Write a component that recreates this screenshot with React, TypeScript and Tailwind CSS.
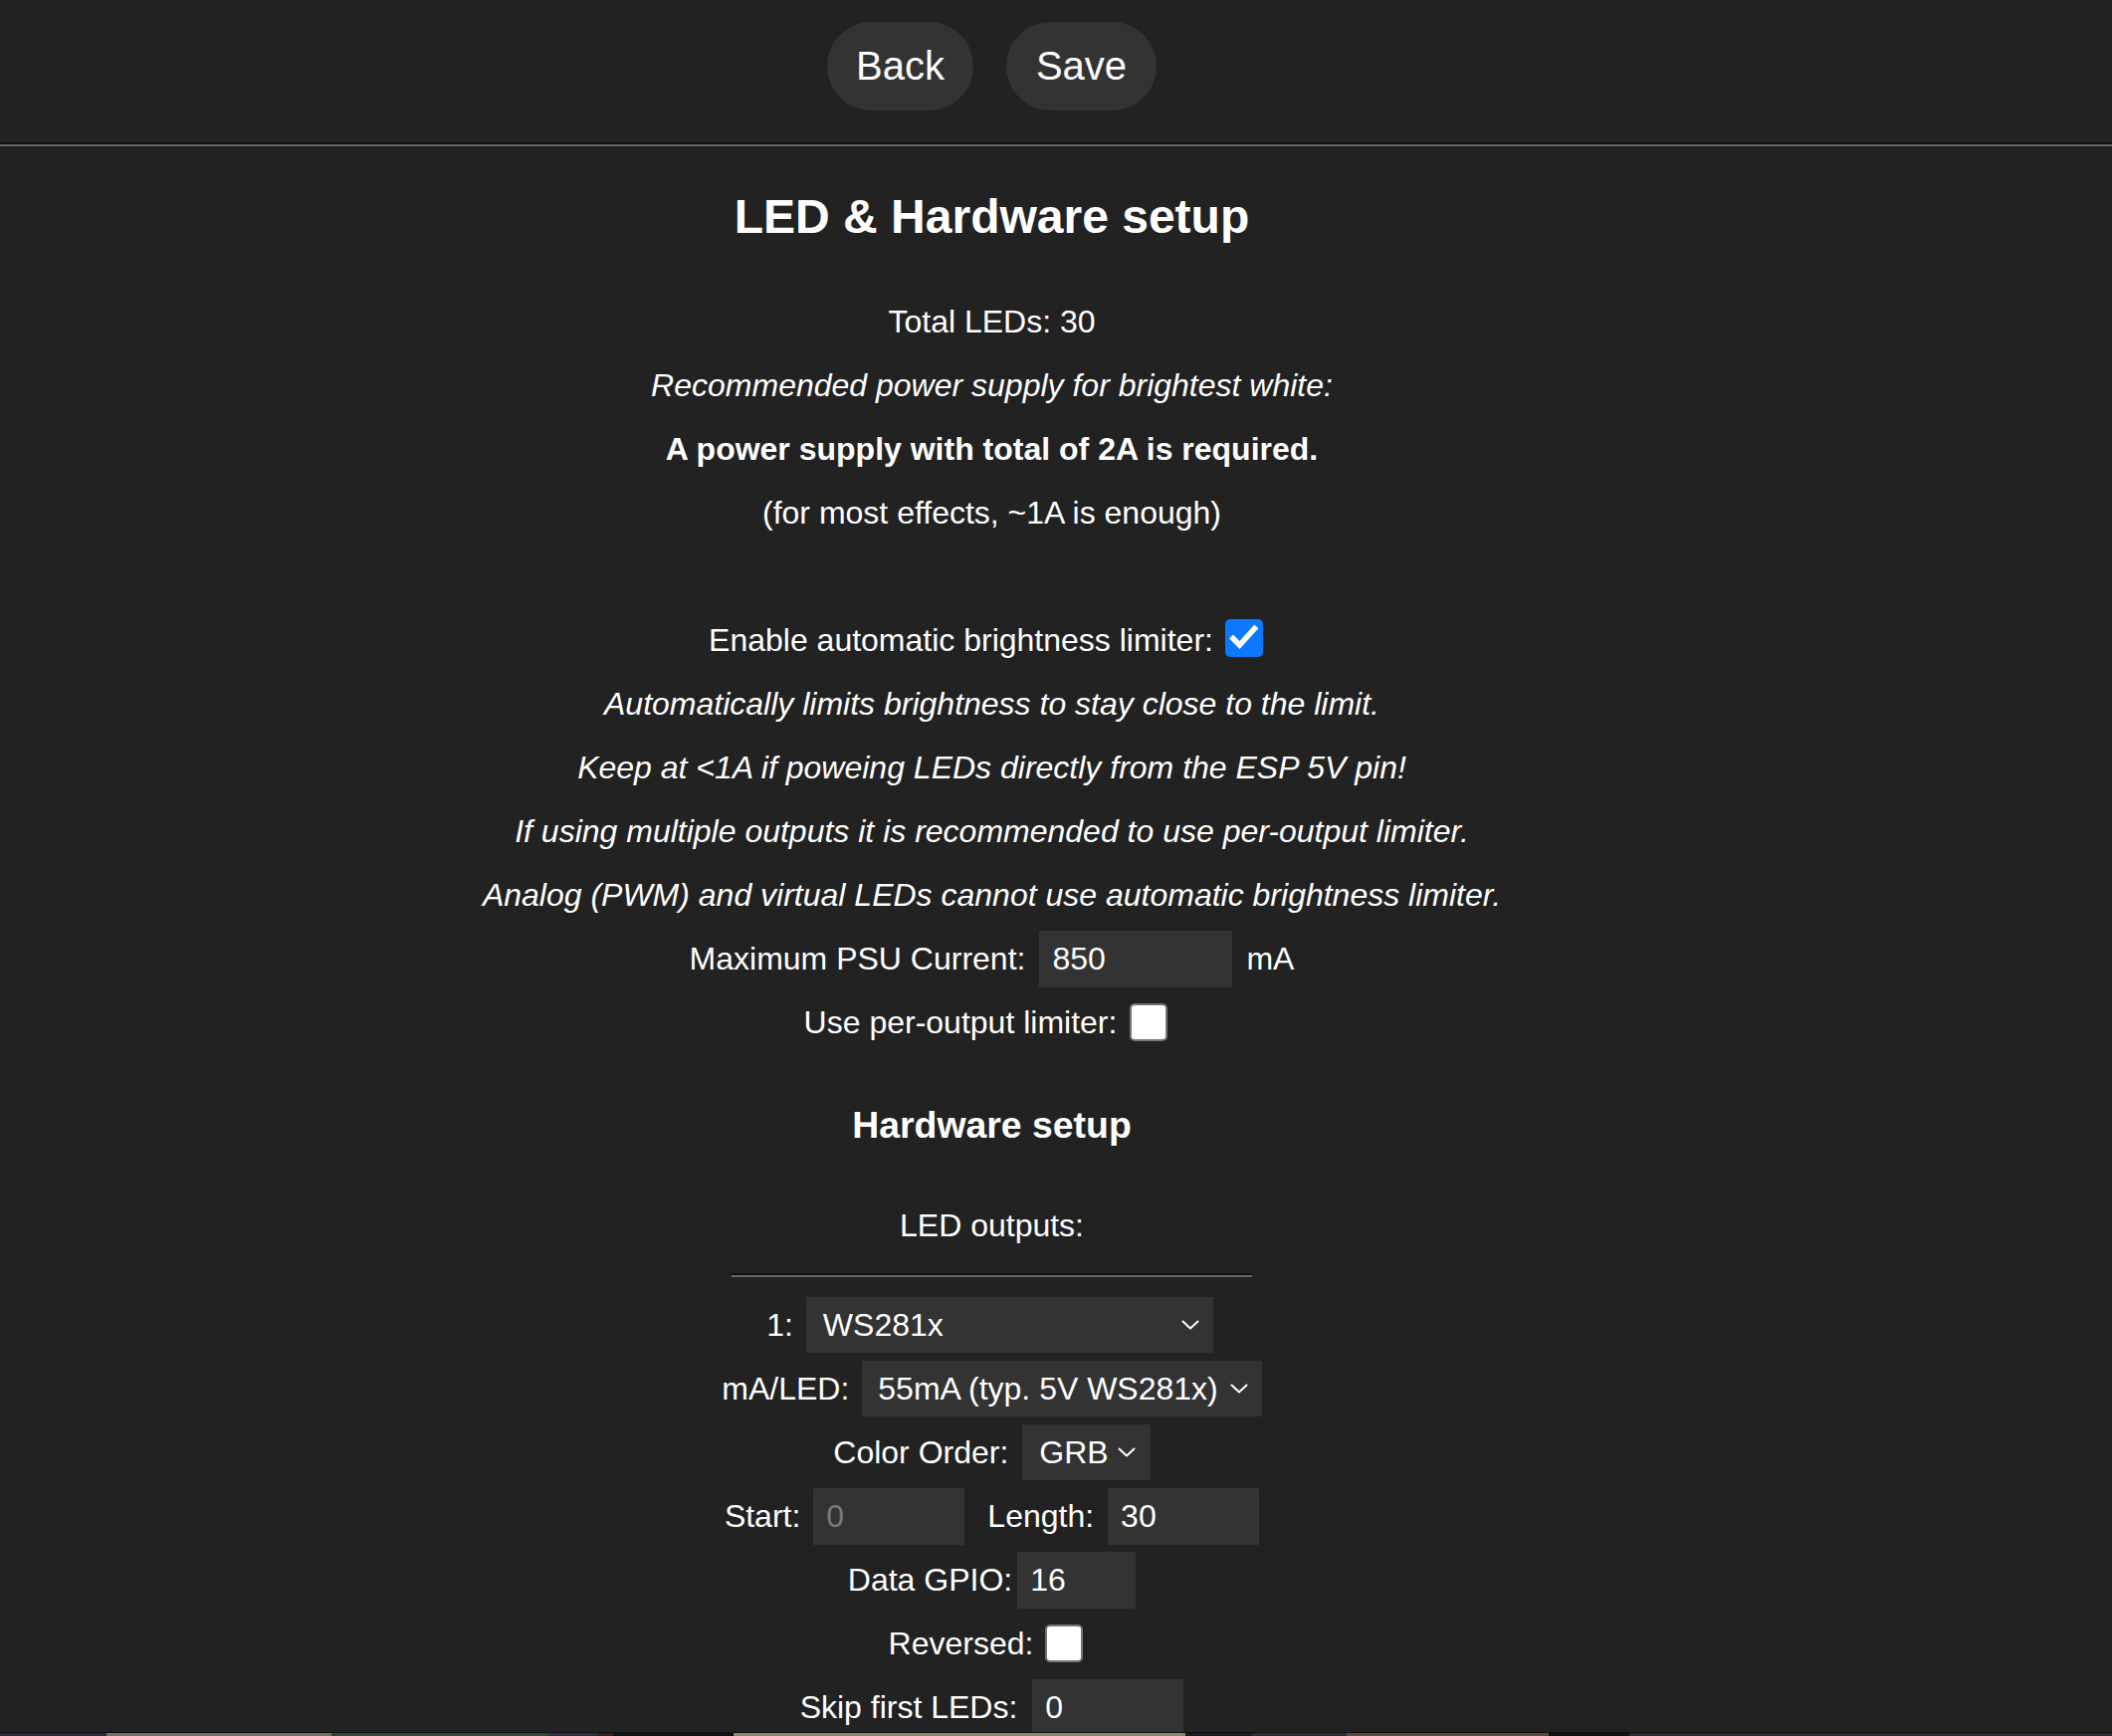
import React from "react";

// chevron used by the fake selects
const Chevron = () => (
  <svg width="18" height="10" viewBox="0 0 18 10" className="shrink-0">
    <path d="M1.5 1.5 L9 8.5 L16.5 1.5" fill="none" stroke="#fff" strokeWidth="2" strokeLinecap="round" strokeLinejoin="round" />
  </svg>
);

const CheckBox = ({ checked, className = "" }: { checked: boolean; className?: string }) =>
  checked ? (
    <span className={`flex h-[38px] w-[38px] shrink-0 items-center justify-center rounded-[5px] bg-[#0b78ff] ${className}`}>
      <svg width="38" height="38" viewBox="0 0 38 38">
        <path d="M8 19.5 L14.5 26 L29.5 9.5" fill="none" stroke="#fff" strokeWidth="5.5" strokeLinecap="square" />
      </svg>
    </span>
  ) : (
    <span className={`block h-[38px] w-[38px] shrink-0 rounded-[5px] border-2 border-[#767676] bg-white ${className}`} />
  );

const Field = ({ value, width, muted = false }: { value: string; width: string; muted?: boolean }) => (
  <input
    readOnly
    value={value}
    className={`h-[57px] ${width} bg-[#333] pl-[13px] text-[32px] outline-none ${muted ? "text-[#7a7a7a]" : "text-white"}`}
  />
);

const Line = ({ children, className = "" }: { children: React.ReactNode; className?: string }) => (
  <div className={`h-[64px] leading-[64px] text-center whitespace-nowrap ${className}`}>{children}</div>
);

const Row = ({ children, className = "" }: { children: React.ReactNode; className?: string }) => (
  <div className={`flex h-[64px] items-center justify-center whitespace-nowrap ${className}`}>{children}</div>
);

const strip = [
  { w: "w-[107px]", c: "bg-[#2a2a36]" },
  { w: "w-[226px]", c: "bg-[#726e65]" },
  { w: "w-[218px]", c: "bg-[#34482f]" },
  { w: "w-[49px]", c: "bg-[#303040]" },
  { w: "w-[16px]", c: "bg-[#3a1c1c]" },
  { w: "w-[121px]", c: "bg-[#121215]" },
  { w: "w-[454px]", c: "bg-[#8b8570]" },
  { w: "w-[67px]", c: "bg-[#1a1a1f]" },
  { w: "w-[95px]", c: "bg-[#2e2c35]" },
  { w: "w-[203px]", c: "bg-[#5b4a42]" },
  { w: "w-[81px]", c: "bg-[#111]" },
  { w: "flex-1", c: "bg-[#2a2a30]" },
];

export default function App() {
  return (
    <div className="flex h-[1744px] w-full flex-col overflow-hidden bg-[#222] font-['Liberation_Sans',Arial,sans-serif] text-white">
      <div className="min-h-0 flex-1 overflow-hidden">
        {/* top buttons */}
        <div className="flex w-[1993px] justify-center gap-[33px] pt-[22px] pb-[32px]">
          <button className="h-[89px] w-[147px] rounded-full bg-[#333] pb-[2px] text-[40px] text-white">Back</button>
          <button className="h-[89px] w-[151px] rounded-full bg-[#333] pb-[2px] text-[40px] text-white">Save</button>
        </div>
        <div className="h-[4px] w-full border-t-2 border-b-2 border-t-[#111] border-b-[#666]" />

        <div className="flex w-[1993px] flex-col items-center text-[32px]">
          <h2 className="mt-[39px] h-[64px] text-[48px] leading-[64px] font-bold">LED &amp; Hardware setup</h2>

          <div className="mt-[41px] flex flex-col items-center">
            <Line>Total LEDs: 30</Line>
            <Line className="italic">Recommended power supply for brightest white:</Line>
            <Line className="font-bold">A power supply with total of 2A is required.</Line>
            <Line>(for most effects, ~1A is enough)</Line>
            <Line>{" "}</Line>
            <Row className="pr-[12px]">
              <span>Enable automatic brightness limiter:</span>
              <CheckBox checked className="ml-[12px] -translate-y-[2px]" />
            </Row>
            <Line className="italic">Automatically limits brightness to stay close to the limit.</Line>
            <Line className="italic">Keep at &lt;1A if poweing LEDs directly from the ESP 5V pin!</Line>
            <Line className="italic">If using multiple outputs it is recommended to use per-output limiter.</Line>
            <Line className="italic">Analog (PWM) and virtual LEDs cannot use automatic brightness limiter.</Line>
            <Row>
              <span className="mr-[14px]">Maximum PSU Current:</span>
              <Field value="850" width="w-[194px]" />
              <span className="ml-[14px]">mA</span>
            </Row>
            <Row className="pr-[12px]">
              <span>Use per-output limiter:</span>
              <CheckBox checked={false} className="ml-[13px]" />
            </Row>
          </div>

          <h3 className="mt-[39px] h-[64px] text-[37.4px] leading-[64px] font-bold">Hardware setup</h3>
          <Line className="mt-[37px]">LED outputs:</Line>
          <div className="mt-[16px] h-[4px] w-[523px] border-t-2 border-b-2 border-t-[#111] border-b-[#666]" />

          <div className="mt-[16px] flex flex-col items-center">
            <Row className="pr-[4px]">
              <span className="mr-[13px]">1:</span>
              <div className="flex h-[56px] w-[409px] items-center justify-between bg-[#333] pl-[17px] pr-[14px]">
                <span>WS281x</span>
                <Chevron />
              </div>
            </Row>
            <Row>
              <span className="mr-[13px]">mA/LED:</span>
              <div className="flex h-[56px] items-center gap-[12px] bg-[#333] pl-[16px] pr-[14px]">
                <span>55mA (typ. 5V WS281x)</span>
                <Chevron />
              </div>
            </Row>
            <Row>
              <span className="mr-[14px]">Color Order:</span>
              <div className="flex h-[56px] items-center gap-[9px] bg-[#333] pl-[17px] pr-[15px]">
                <span>GRB</span>
                <Chevron />
              </div>
            </Row>
            <Row>
              <span className="mr-[13px]">Start:</span>
              <Field value="0" width="w-[152px]" muted />
              <span className="ml-[23px] mr-[14px]">Length:</span>
              <Field value="30" width="w-[152px]" />
            </Row>
            <Row>
              <span className="mr-[5px]">Data GPIO:</span>
              <Field value="16" width="w-[119px]" />
            </Row>
            <Row className="pr-[12px]">
              <span className="mr-[12px]">Reversed:</span>
              <CheckBox checked={false} />
            </Row>
            <Row>
              <span className="mr-[15px]">Skip first LEDs:</span>
              <Field value="0" width="w-[152px]" />
            </Row>
          </div>
        </div>
      </div>

      {/* strip of the page behind, peeking at the bottom edge */}
      <div className="flex h-[4px] shrink-0 flex-col">
        <div className="h-[1px] bg-[#111]" />
        <div className="flex h-[3px]">
          {strip.map((s, i) => (
            <div key={i} className={`${s.w} ${s.c} shrink-0`} />
          ))}
        </div>
      </div>
    </div>
  );
}
